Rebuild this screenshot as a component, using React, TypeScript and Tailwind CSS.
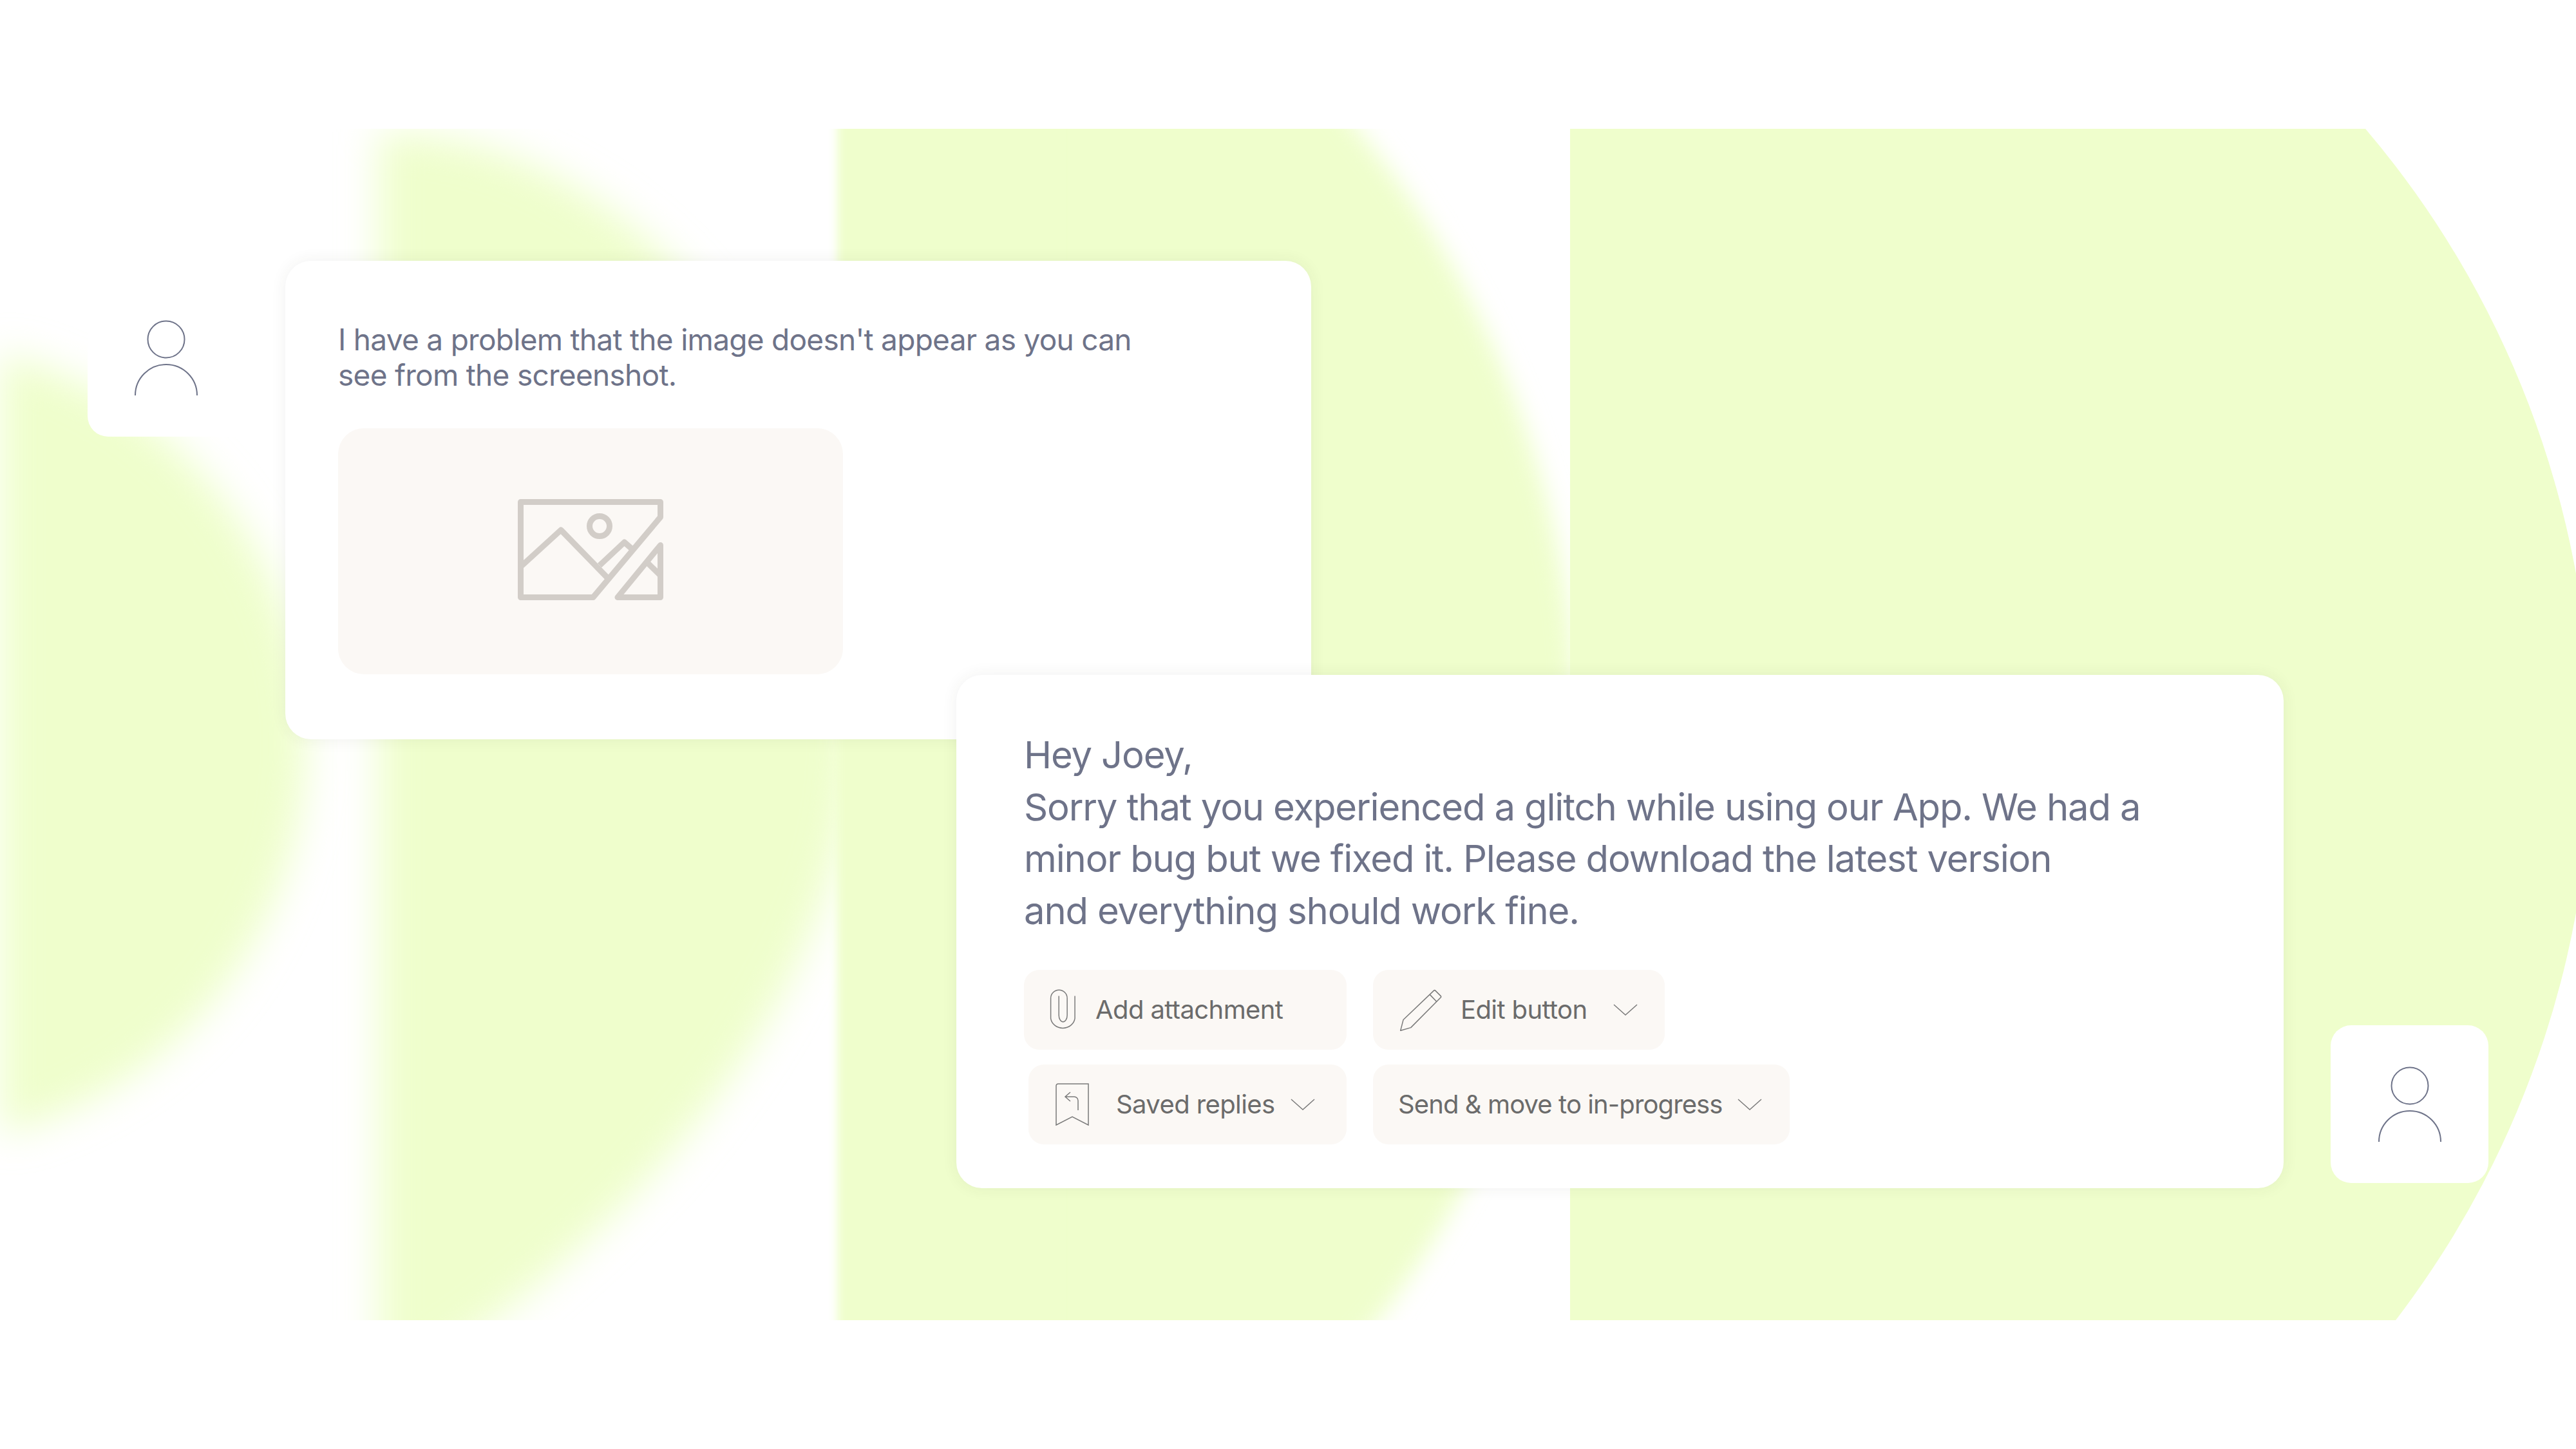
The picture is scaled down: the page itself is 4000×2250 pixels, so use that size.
import React from 'react';

const FONT = "font-['Inter','Liberation_Sans',sans-serif]";

// Green shapes behind the cards
const Backdrop = () => (
  <svg className="absolute inset-0" width="4000" height="2250" viewBox="0 0 4000 2250" fill="none">
    <defs>
      <clipPath id="band">
        <rect x="0" y="200" width="4000" height="1850" />
      </clipPath>
      <filter id="wide" x="-20%" y="-20%" width="140%" height="140%">
        <feGaussianBlur stdDeviation="30" />
      </filter>
      <filter id="mid" x="-20%" y="-20%" width="140%" height="140%">
        <feGaussianBlur stdDeviation="18" />
      </filter>
      <filter id="edge" x="-20%" y="-20%" width="140%" height="140%">
        <feGaussianBlur stdDeviation="7" />
      </filter>
    </defs>
    <g clipPath="url(#band)" fill="#effecc">
      <path filter="url(#wide)" d="M0 549 A624 624 0 0 1 0 1761 Z" />
      <path filter="url(#wide)" d="M588 205 A735 945 0 0 1 1323 1150 C1323 1500 1048 1850 698 2100 L588 2200 Z" />
      <rect filter="url(#edge)" x="1300" y="100" width="500" height="2090" />
      <path filter="url(#mid)" d="M1700 100 L2017 100 A1480 1480 0 0 1 2017 2190 L1700 2190 Z" />
      <path d="M2438 200 L3673 200 A1473 1473 0 0 1 3720 2050 L2438 2050 Z" />
    </g>
  </svg>
);

const PersonIcon = () => (
  <svg width="100" height="118" viewBox="0 0 100 118" fill="none" stroke="#6e7389" strokeWidth="2">
    <circle cx="50" cy="30" r="28.5" />
    <path d="M2 117 A48 48 0 0 1 98 117" />
  </svg>
);

const ImageIcon = () => (
  <svg width="226" height="157" viewBox="805 775 226 157" fill="none" stroke="#d2cdc8" strokeWidth="9" strokeLinejoin="round">
    <path d="M809.5 779.5 H1026.5 V803 L922 927.5 H809.5 Z" />
    <circle cx="932" cy="817" r="15.5" />
    <path d="M809.5 880 L872 823 L945 898" />
    <path d="M932 878 L970.5 842 L983 853" />
    <path d="M1026.5 846.5 L960 927.5 H1026.5 Z" />
    <path d="M1005.5 873 L1026 893" />
  </svg>
);

const Chevron = () => (
  <svg width="38" height="18" viewBox="0 0 38 18" fill="none" stroke="#7a7a7a" strokeWidth="1.5">
    <path d="M1 1 L19 17 L37 1" />
  </svg>
);

const ClipIcon = () => (
  <svg width="41" height="64" viewBox="36 33 122 193" fill="none" stroke="#7a7a7a" strokeWidth="4.5">
    <path d="M153 65 V170 A57 52 0 0 1 40 170 V75 A38 38 0 0 1 117 75 V155 A19 30 0 0 1 78 155 V65" />
  </svg>
);

const PencilIcon = () => (
  <svg width="65" height="65" viewBox="40 30 194 194" fill="none" stroke="#7a7a7a" strokeWidth="4.5" strokeLinejoin="round">
    <path d="M42 222 L55 172 L196 37 Q200 33 204 37 L228 61 Q232 65 228 69 L90 208 Z" />
    <path d="M178 55 L210 88" />
  </svg>
);

const BookmarkIcon = () => (
  <svg width="52" height="66" viewBox="0 0 52 66" fill="none" stroke="#7a7a7a" strokeWidth="1.5">
    <path d="M1 65 V4 A3 3 0 0 1 4 1 H51 V65 L26 52 Z" />
    <path d="M35 42 V27 A6 6 0 0 0 29 21 H16 M23 14 L15 21 L23 28" />
  </svg>
);

const ActionButton = ({ className, children }: { className: string; children: React.ReactNode }) => (
  <div className={`flex h-[124px] items-center whitespace-nowrap rounded-[24px] bg-[#fbf8f5] text-[40px] leading-none tracking-[-0.6px] text-[#6b6b6b] ${className}`}>
    {children}
  </div>
);

const App: React.FC = () => {
  return (
    <div className={`relative h-[2250px] w-[4000px] overflow-hidden bg-white ${FONT}`}>
      <Backdrop />

      <div className="relative flex flex-col pl-[136px] pt-[405px]">
        {/* Customer message */}
        <div className="flex items-start">
          <div className="mt-[28px] flex h-[245px] w-[307px] shrink-0 justify-start rounded-bl-[32px] bg-white pl-[72px] pt-[64px]">
            <PersonIcon />
          </div>
          <div className="h-[743px] w-[1593px] rounded-[40px] bg-white pl-[82px] pt-[95px] shadow-[0_0_24px_rgba(60,60,40,0.07)]">
            <p className="whitespace-nowrap text-[46px] leading-[55px] tracking-[-0.72px] text-[#6e7389]">
              I have a problem that the image doesn't appear as you can
              <br />
              see from the screenshot.
            </p>
            <div className="mt-[55px] flex h-[382px] w-[784px] items-center justify-center rounded-[40px] bg-[#fbf8f5] pb-[6px]">
              <ImageIcon />
            </div>
          </div>
        </div>

        {/* Agent reply */}
        <div className="ml-[1349px] mt-[-100px] flex items-start">
          <div className="h-[797px] w-[2061px] rounded-[40px] bg-white pl-[105px] pt-[84px] shadow-[0_0_24px_rgba(60,60,40,0.07)]">
            <p className="whitespace-nowrap text-[58px] leading-[80.5px] tracking-[-1.15px] text-[#6e7389]">
              Hey Joey,
              <br />
              Sorry that you experienced a glitch while using our App. We had a
              <br />
              minor bug but we fixed it. Please download the latest version
              <br />
              and everything should work fine.
            </p>
            <div className="mt-[52px] flex gap-[41px]">
              <ActionButton className="w-[501px] pl-[40px]">
                <ClipIcon />
                <span className="ml-[30px]">Add attachment</span>
              </ActionButton>
              <ActionButton className="w-[453px] pl-[42px]">
                <PencilIcon />
                <span className="ml-[29px]">Edit button</span>
                <span className="ml-[40px]"><Chevron /></span>
              </ActionButton>
            </div>
            <div className="mt-[23px] flex gap-[41px]">
              <ActionButton className="ml-[7px] w-[494px] pl-[42px]">
                <BookmarkIcon />
                <span className="ml-[42px]">Saved replies</span>
                <span className="ml-[24px]"><Chevron /></span>
              </ActionButton>
              <ActionButton className="w-[647px] pl-[39px]">
                <span className="tracking-[-0.9px]">Send &amp; move to in-progress</span>
                <span className="ml-[24px]"><Chevron /></span>
              </ActionButton>
            </div>
          </div>
          <div className="ml-[73px] mt-[544px] flex h-[245px] w-[245px] shrink-0 items-start justify-center rounded-[32px] bg-white pt-[64px]">
            <PersonIcon />
          </div>
        </div>
      </div>
    </div>
  );
};

export default App;
